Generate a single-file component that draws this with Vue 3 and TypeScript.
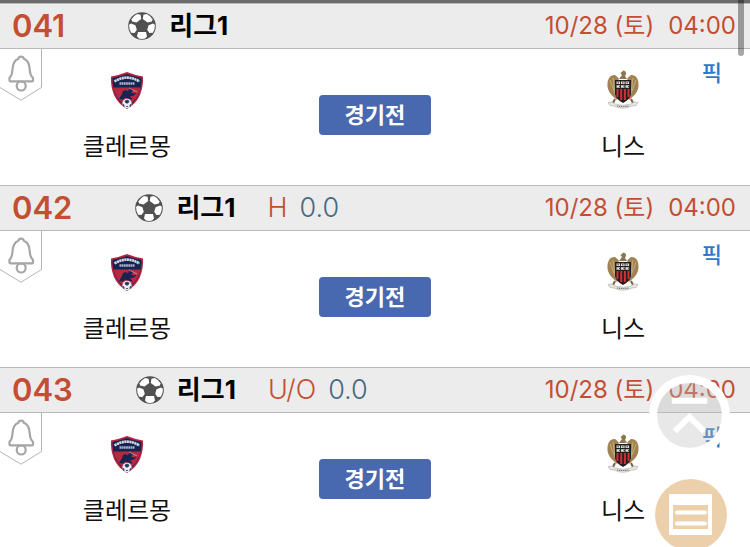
<script setup lang="ts">
interface Match {
  no: string
  league: string
  kind?: string
  line?: string
  date: string
  time: string
  home: string
  away: string
  status: string
}

const shared = {
  league: '리그1',
  date: '10/28 (토)',
  time: '04:00',
  home: '클레르몽',
  away: '니스',
  status: '경기전',
}

const matches: Match[] = [
  { no: '041', ...shared },
  { no: '042', kind: 'H', line: '0.0', ...shared },
  { no: '043', kind: 'U/O', line: '0.0', ...shared },
]

function toTop(): void {
  window.scrollTo({ top: 0, behavior: 'smooth' })
}
</script>

<template>
  <main class="page">
    <section v-for="m in matches" :key="m.no" class="match">
      <header class="head">
        <span class="no">{{ m.no }}</span>
        <svg class="ball" viewBox="0 0 28 28" aria-hidden="true">
          <circle cx="14" cy="14" r="13.8" fill="#515151" />
          <g fill="#fff">
            <path d="M3.600 7.200Q5.500 3.500 9.200 1.900l3.400.9.600 4.200-4.700 3.600-4.500-1.200Z" />
            <path d="M24.400 7.200q-1.900-3.700-5.600-5.300l-3.400.9-.6 4.200 4.700 3.600 4.500-1.200Z" />
            <path d="m1.100 12.700 1.900-1.200 4.400 1.700 1.400 4.600-2.200 3.200-3.500-.3Q.9 17 1.100 12.700Z" />
            <path d="m26.900 12.700-1.900-1.200-4.400 1.700-1.400 4.600 2.200 3.200 3.500-.3q2.200-3.700 2-8Z" />
            <path d="M10 20h8l1 4.600-1.900 2q-3.100.8-6.200 0L9 24.600Z" />
          </g>
        </svg>
        <strong class="league">{{ m.league }}</strong>
        <span v-if="m.kind" class="odds"><span class="kind">{{ m.kind }}</span>{{ m.line }}</span>
        <time class="when"><span>{{ m.date }}</span><span>{{ m.time }}</span></time>
      </header>

      <div class="body">
        <button class="alarm" type="button" aria-label="알림">
          <svg viewBox="0 0 42 52" fill="none" stroke="#a6a6a6">
            <path d="M41.500 0v38.500L21 51.200 0 38.500" stroke="#b4b4b4" />
            <path
              d="M9.500 31.500v-2.700c2.200-2 2.700-3.800 2.900-7.800.3-6.200 1.600-9.800 6-11.300.3-1.300 1.200-2 2.700-2s2.400.7 2.700 2c4.400 1.500 5.700 5.100 6 11.300.2 4 .7 5.800 3.200 7.800v2.700c0 .5-.4.800-.9.800H10.400c-.5 0-.9-.3-.9-.8Z"
              stroke-width="2.200"
            />
            <circle cx="21.200" cy="37" r="4.500" stroke-width="2.200" />
          </svg>
        </button>

        <div class="team">
          <svg class="crest" viewBox="0 0 40 40" aria-hidden="true">
            <path d="M4 6.500Q12.500 5 20 2q7.500 3 16 4.500.6 9.500-3 18.500-4 9-13 14-9-5-13-14-3.600-9-3-18.500Z" fill="#b5243f" />
            <path d="M5.500 8Q13 6.500 20 4q7 2.500 14.500 4 .3 8.500-3 16.500-3.500 8-11.500 12.700Q12 32.500 8.500 24.500 5.200 16.500 5.500 8Z" fill="#182450" />
            <path d="M6.500 17.500h27q-1 5-3.500 9.300-3.300 5.700-10 9.200-6.700-3.500-10-9.200-2.500-4.300-3.500-9.300Z" fill="#b52a42" />
            <path d="M7.500 11.500Q14 7.600 20 7.600t12.500 3.900" fill="none" stroke="#d3d8e4" stroke-width="2.600" stroke-dasharray="2.200 .4" />
            <path d="M12.500 13.500h15" stroke="#aab3c8" stroke-width="2.400" stroke-dasharray="1.800 .4" />
            <path d="m12 29 3-5 1-3 3-1 2 1.500 1-3h3l1 2-2 2 3 1 3-1-3 3-4 1 3 3-5-1-3-1-2 2Z" fill="#182450" />
            <path d="m22 18 8 4" stroke="#d9a2ad" stroke-width=".8" />
            <circle cx="20" cy="33.500" r="4.700" fill="#e9edf3" />
            <path d="m18 31 2-1 2 1-1 2h-2Zm-2.500 3 1.500 1v2m7.500-3-1.500 1v2m-4-.5h2" fill="#26335c" stroke="#26335c" stroke-width=".8" />
          </svg>
          <span class="name">{{ m.home }}</span>
        </div>

        <div class="state"><button type="button" class="status">{{ m.status }}</button></div>

        <div class="team">
          <svg class="crest" viewBox="0 0 40 40" aria-hidden="true">
            <path d="m19 5-1.500-2 3-2.500 2 1 .7 2-1.200 2.500 2 3h-8Z" fill="#8a7752" />
            <path d="M15.500 8 12 5Q6 4.500 4.600 12q-1 8 3.900 13l5.500 5L17 24Z" fill="#a08350" />
            <path d="m24.500 8 3.500-3q6-.5 7.400 7 1 8-3.900 13L26 30l-3-6Z" fill="#a08350" />
            <path d="m7 10 4 11m-1-13 2 16m21-14-4 11m1-13-2 16" stroke="#c5ac7c" stroke-width="1" />
            <path d="M12 10h16v14q-1.500 6-8 9-6.500-3-8-9Z" fill="#241d1e" />
            <path d="M14.500 19v8m3.700-8v11m3.700-11v11m3.600-11v8" stroke="#d02f39" stroke-width="2" />
            <path d="M13.500 12.800h13M13.500 16.600h13" stroke="#e2e1da" stroke-width="2.500" stroke-dasharray="3.600 .9" />
            <path d="M14.500 12.800h1.500m3 0h1.500m3 0h1.500m-9 3.800h1.500m3 0h1.500m3 0h1" stroke="#3e393a" />
            <path d="m12 29-2 4m18-4 2 4" stroke="#79633d" stroke-width="2" />
            <path d="m5 32.500 4-.5 3 2q8 2.600 16 0l3-2 4 .5-2 3-4 .5q-9 4.500-18 0l-4-.5Z" fill="#e5e4e1" stroke="#b7b5b1" stroke-width=".7" />
            <path d="M14 36q6 1 12 0" stroke="#77736e" stroke-width="1.200" stroke-dasharray="1.200 .7" fill="none" />
          </svg>
          <span class="name">{{ m.away }}</span>
        </div>

        <a class="pick" href="#pick">픽</a>
      </div>
    </section>

    <div class="thumb" aria-hidden="true"></div>

    <button class="fab top" type="button" aria-label="맨 위로" @click="toTop">
      <svg viewBox="0 0 66 66" fill="none" stroke="#fff" stroke-width="6">
        <path d="M15 18h36" />
        <path d="m18 49 15-14.500L48 49" />
      </svg>
    </button>
    <button class="fab note" type="button" aria-label="목록">
      <svg viewBox="0 0 72 72">
        <path d="M14 15h43v41H14Z" fill="#fff" />
        <path d="M18 26h35v24H18Z" fill="#ecd0ac" />
        <path d="M22 33.500h28M22 44.500h28" stroke="#fff" stroke-width="4" stroke-linecap="round" />
      </svg>
    </button>
  </main>
</template>

<style>
body {
  background: #fff;
}
</style>

<style scoped>
.page {
  height: 100vh;
  overflow: hidden;
  box-sizing: border-box;
  border-top: 3px solid #6b6b6b;
  font-family: Inter, "Noto Sans CJK KR", sans-serif;
  color: #111;
}

button {
  padding: 0;
  border: 0;
  background: none;
  font: inherit;
  cursor: pointer;
}

svg {
  display: block;
}

.head {
  display: flex;
  align-items: center;
  box-sizing: border-box;
  height: 46px;
  padding: 0 14px 0 12px;
  border: solid #b9b9b9;
  border-width: 1px 0;
  background: #ececec;
  color: #c34f33;
  line-height: 36px;
  white-space: nowrap;
}

.no {
  font-size: 31px;
  font-weight: 600;
}

.ball {
  width: 28px;
  height: 28px;
  margin: 0 13px 0 63px;
}

.league {
  color: #000;
  font-size: 26px;
  font-weight: 700;
}

.odds {
  display: flex;
  gap: 12px;
  margin-left: 32px;
  color: #476a7e;
  font-size: 27px;
  font-weight: 300;
}

.kind {
  color: #c34f33;
}

.when {
  display: flex;
  align-items: baseline;
  gap: 14px;
  margin-left: auto;
  font-size: 24px;
}

.body {
  position: relative;
  display: grid;
  grid-template-columns: 21fr 20fr 21fr;
  height: 136px;
}

.alarm {
  position: absolute;
  top: 0;
  left: 0;
  width: 42px;
  height: 52px;
}

.team {
  display: flex;
  flex-direction: column;
  align-items: center;
  gap: 21px;
  padding-top: 21px;
}

.crest {
  width: 40px;
  height: 40px;
}

.name {
  font-size: 24px;
  line-height: 32px;
}

.state {
  display: flex;
  justify-content: center;
  align-items: flex-start;
  padding-top: 46px;
}

.status {
  width: 112px;
  height: 40px;
  border-radius: 4px;
  background: #4868b0;
  color: #fff;
  font-size: 22px;
  font-weight: 700;
  line-height: 40px;
}

.pick {
  position: absolute;
  top: 8px;
  right: 28px;
  color: #2f78c8;
  font-size: 22px;
  font-weight: 500;
  line-height: 32px;
  text-decoration: none;
}

.thumb {
  position: absolute;
  top: 0;
  right: 6px;
  width: 6px;
  height: 56px;
  border-radius: 0 0 3px 3px;
  background: rgba(0, 0, 0, 0.35);
}

.fab {
  position: fixed;
  border-radius: 50%;
}

.top {
  right: 20px;
  bottom: 91px;
  width: 81px;
  height: 81px;
  border: 8px solid #fff;
  background: rgba(188, 188, 188, 0.35);
  background-clip: padding-box;
}

.note {
  right: 23px;
  bottom: -4px;
  width: 72px;
  height: 72px;
  background: #ecd0ac;
}
</style>
